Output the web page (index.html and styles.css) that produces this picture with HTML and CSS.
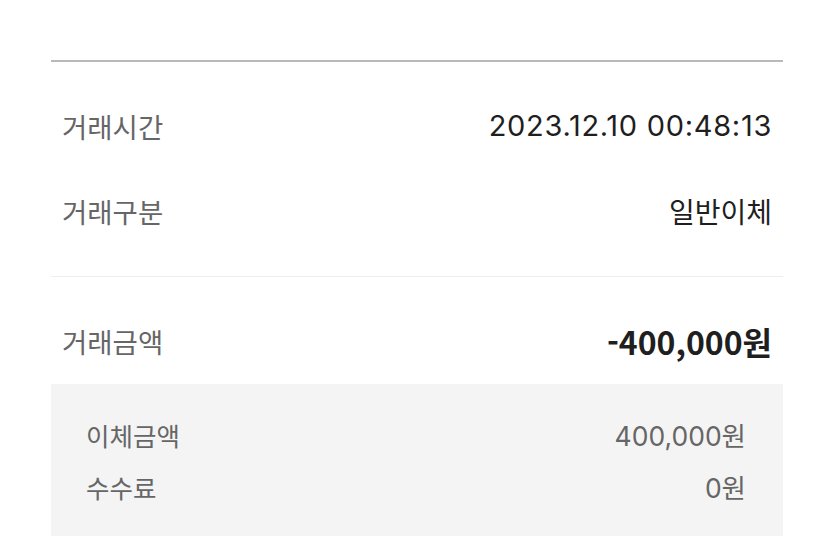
FILE: index.html
```html
<!DOCTYPE html>
<html lang="ko">
<head>
<meta charset="utf-8">
<link rel="stylesheet" href="styles.css">
</head>
<body>
<div class="card">
  <div class="group">
    <div class="row">
      <span class="label">거래시간</span>
      <span class="value num">2023.12.10 00:48:13</span>
    </div>
    <div class="row">
      <span class="label">거래구분</span>
      <span class="value">일반이체</span>
    </div>
  </div>
  <div class="group amount-group">
    <div class="row">
      <span class="label">거래금액</span>
      <span class="value amount">-400,000원</span>
    </div>
  </div>
  <div class="detail">
    <div class="drow">
      <span class="dlabel">이체금액</span>
      <span class="dvalue">400,000원</span>
    </div>
    <div class="drow">
      <span class="dlabel">수수료</span>
      <span class="dvalue">0원</span>
    </div>
  </div>
</div>
</body>
</html>
```
FILE: styles.css
```css
html, body {
  margin: 0;
  padding: 0;
  background: #ffffff;
}
body {
  font-family: "Noto Sans CJK KR", "Noto Sans", sans-serif;
}
.card {
  margin: 60px 52px 0 51px;
  border-top: 2px solid #b9b9b9;
}
.group {
  padding: 21px 11px 23px;
  border-bottom: 1px solid #eeeeee;
}
.amount-group {
  padding-bottom: 1px;
  border-bottom: none;
}
.row {
  height: 85px;
  display: flex;
  align-items: center;
  justify-content: space-between;
}
.label {
  font-size: 27.5px;
  color: #666666;
}
.value {
  font-size: 28px;
  color: #1f1f1f;
}
.num {
  font-family: "Inter", "Noto Sans CJK KR", sans-serif;
  font-size: 29px;
  letter-spacing: 0.7px;
}
.amount {
  font-family: "Noto Sans CJK KR", sans-serif;
  font-weight: 700;
  font-size: 32px;
  color: #1f1f1f;
}
.detail {
  background: #f4f4f4;
  padding: 24px 37px 24px 35px;
}
.drow {
  height: 52px;
  display: flex;
  align-items: center;
  justify-content: space-between;
}
.dlabel {
  font-size: 25.5px;
  color: #666666;
}
.dvalue {
  font-family: "Inter", "Noto Sans CJK KR", sans-serif;
  font-size: 26.5px;
  color: #666666;
}
```
